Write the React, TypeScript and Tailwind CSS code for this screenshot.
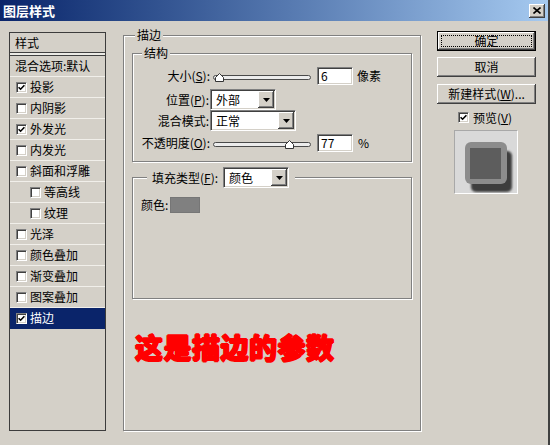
import React from 'react'

const raised =
  'bg-[#d4d0c8] shadow-[inset_-1px_-1px_0_#404040,inset_1px_1px_0_#ffffff,inset_-2px_-2px_0_#808080,inset_2px_2px_0_#d4d0c8]'
const sunken =
  'border border-t-[#808080] border-l-[#808080] border-r-white border-b-white shadow-[inset_1px_1px_0_#404040,inset_-1px_-1px_0_#d4d0c8]'
const etched = 'border border-[#808080] shadow-[inset_1px_1px_0_#ffffff,1px_1px_0_#ffffff]'

function Check({ on }: { on?: boolean }) {
  return (
    <span className={`flex h-[11px] w-[11px] shrink-0 items-center justify-center bg-white ${sunken}`}>
      {on && (
        <svg width="7" height="7" viewBox="0 0 7 7">
          <path d="M0.6 3.2 L2.6 5.2 L6.4 1.2" fill="none" stroke="#000" strokeWidth="1.6" />
        </svg>
      )}
    </span>
  )
}

function Combo({ value, w }: { value: string; w: string }) {
  return (
    <div className={`flex h-[21px] ${w} items-stretch bg-white p-[1px] ${sunken}`}>
      <span className="flex-1 pl-[4px] leading-[17px]">{value}</span>
      <span className={`flex w-[16px] items-center justify-center ${raised}`}>
        <svg width="7" height="4" viewBox="0 0 7 4">
          <path d="M0 0h7L3.5 4z" fill="#000" />
        </svg>
      </span>
    </div>
  )
}

function Slider({ pos }: { pos: number }) {
  return (
    <div className="relative ml-[3px] h-[20px] w-[98px] pt-[9px]">
      <div className="h-[5px] rounded-full border border-[#4a4a4a] bg-[#ececec]" />
      <svg className="absolute top-[7px]" style={{ left: pos }} width="9" height="9" viewBox="0 0 9 9">
        <path d="M0.5 8.5V4.5L4.5 0.5L8.5 4.5V8.5Z" fill="#fff" stroke="#333" />
      </svg>
    </div>
  )
}

function Field({ value }: { value: string }) {
  return (
    <div className={`ml-[6px] h-[18px] w-[36px] bg-white pl-[3px] leading-[16px] ${sunken}`}>{value}</div>
  )
}

const items: { t: string; on?: boolean; sub?: boolean; sel?: boolean }[] = [
  { t: '投影', on: true },
  { t: '内阴影' },
  { t: '外发光', on: true },
  { t: '内发光' },
  { t: '斜面和浮雕' },
  { t: '等高线', sub: true },
  { t: '纹理', sub: true },
  { t: '光泽' },
  { t: '颜色叠加' },
  { t: '渐变叠加' },
  { t: '图案叠加' },
  { t: '描边', on: true, sel: true },
]

export default function App() {
  return (
    <div className="h-[445px] w-[550px] overflow-hidden border-r-2 border-r-[#404040] bg-[#d4d0c8] font-['Noto_Sans_CJK_SC','Noto_Sans',sans-serif] text-[12px] leading-[14px] text-black">
      {/* Title bar */}
      <div className="flex h-[21px] items-center justify-between bg-gradient-to-r from-[#0a246a] to-[#a6caf0] pl-[3px] pr-[3px]">
        <span className="text-[13px] font-bold text-white">图层样式</span>
        <span className={`flex h-[14px] w-[16px] items-center justify-center ${raised}`}>
          <svg width="8" height="7" viewBox="0 0 8 7">
            <path d="M0.5 0.5L7.5 6.5M7.5 0.5L0.5 6.5" stroke="#000" strokeWidth="1.6" />
          </svg>
        </span>
      </div>

      <div className="flex pl-[9px]">
        {/* Style list */}
        <div className="mt-[11px] h-[399px] w-[97px] border border-[#3c3c3c]">
          <div className="h-[20px] border-b border-[#404040] pl-[5px] leading-[19px]">样式</div>
          <div className="h-[3px] border-b border-[#404040] bg-[#ecebe6]" />
          <div className="h-[21px] border-b border-[#f1efea] pl-[5px] leading-[20px]">混合选项:默认</div>
          {items.map(it => (
            <div
              key={it.t}
              className={`flex h-[21px] items-center gap-[3px] border-b ${
                it.sel ? 'border-[#0a246a] bg-[#0a246a] text-white' : 'border-[#f1efea]'
              } ${it.sub ? 'pl-[20px]' : 'pl-[6px]'}`}
            >
              <Check on={it.on} />
              <span>{it.t}</span>
            </div>
          ))}
        </div>

        {/* Stroke settings */}
        <fieldset className={`ml-[17px] mt-[7px] h-[403px] w-[298px] ${etched}`}>
          <legend className="ml-[11px] bg-[#d4d0c8] px-[2px] leading-[14px]">描边</legend>

          <fieldset className={`ml-[8px] mt-[4px] h-[116px] w-[280px] ${etched}`}>
            <legend className="ml-[9px] bg-[#d4d0c8] px-[2px] leading-[14px]">结构</legend>
            <div className="mt-[6px] flex h-[20px] items-center">
              <span className="w-[77px] text-right">
                大小(<u>S</u>):
              </span>
              <Slider pos={2} />
              <Field value="6" />
              <span className="ml-[4px]">像素</span>
            </div>
            <div className="mt-[3px] flex h-[21px] items-center">
              <span className="w-[77px] pr-[1px] text-right">
                位置(<u>P</u>):
              </span>
              <Combo value="外部" w="w-[66px]" />
            </div>
            <div className="flex h-[21px] items-center">
              <span className="w-[77px] pr-[1px] text-right">混合模式:</span>
              <Combo value="正常" w="w-[86px]" />
            </div>
            <div className="mt-[2px] flex h-[20px] items-center">
              <span className="w-[77px] text-right">
                不透明度(<u>O</u>):
              </span>
              <Slider pos={72} />
              <Field value="77" />
              <span className="ml-[5px]">%</span>
            </div>
          </fieldset>

          <fieldset className={`ml-[8px] mt-[5px] h-[132px] w-[280px] ${etched}`}>
            <legend className="ml-[14px] flex items-center bg-[#d4d0c8] pl-[5px] pr-[6px]">
              <span className="mr-[5px]">
                填充类型(<u>F</u>):
              </span>
              <Combo value="颜色" w="w-[66px]" />
            </legend>
            <div className="mt-[8px] flex h-[17px] items-center pl-[8px]">
              <span>颜色:</span>
              <span className="ml-[2px] h-[16px] w-[30px] border border-[#767676] bg-[#808080]" />
            </div>
          </fieldset>

          <div className="ml-[11px] mt-[32px] text-[28px] leading-[32px] font-black tracking-[0.5px] text-[#ff0000] [text-shadow:1px_0_0_#f00,-1px_0_0_#f00,0_1px_0_#f00,0_-1px_0_#f00]">
            这是描边的参数
          </div>
        </fieldset>

        {/* Buttons */}
        <div className="ml-[16px] mt-[10px] flex w-[99px] flex-col">
          <div className="flex h-[20px] border border-black">
            <div className={`flex flex-1 p-[3px] ${raised}`}>
              <div className="flex flex-1 items-center justify-center border border-dotted border-black">确定</div>
            </div>
          </div>
          <div className={`mt-[6px] flex h-[20px] items-center justify-center ${raised}`}>取消</div>
          <div className={`mt-[7px] flex h-[20px] items-center justify-center ${raised}`}>
            新建样式(<u>W</u>)...
          </div>
          <div className="mt-[7px] flex h-[13px] items-center gap-[4px] pl-[21px]">
            <Check on />
            <span>
              预览(<u>V</u>)
            </span>
          </div>
          <div className="ml-[17px] mt-[6px] h-[64px] w-[64px] border border-[#a8a8a8] border-r-white border-b-white bg-[#d9d9d9]">
            <svg width="62" height="62" viewBox="0 0 62 62">
              <defs>
                <filter id="b" x="-20%" y="-20%" width="140%" height="140%">
                  <feGaussianBlur stdDeviation="1.2" />
                </filter>
              </defs>
              <rect x="16" y="20" width="41" height="41" rx="5" fill="#3c3c3c" filter="url(#b)" />
              <rect x="10" y="11" width="42" height="42" rx="6" fill="#8c8c8c" />
              <rect x="15" y="17" width="31" height="31" fill="#5d5d5d" />
            </svg>
          </div>
        </div>
      </div>
    </div>
  )
}
